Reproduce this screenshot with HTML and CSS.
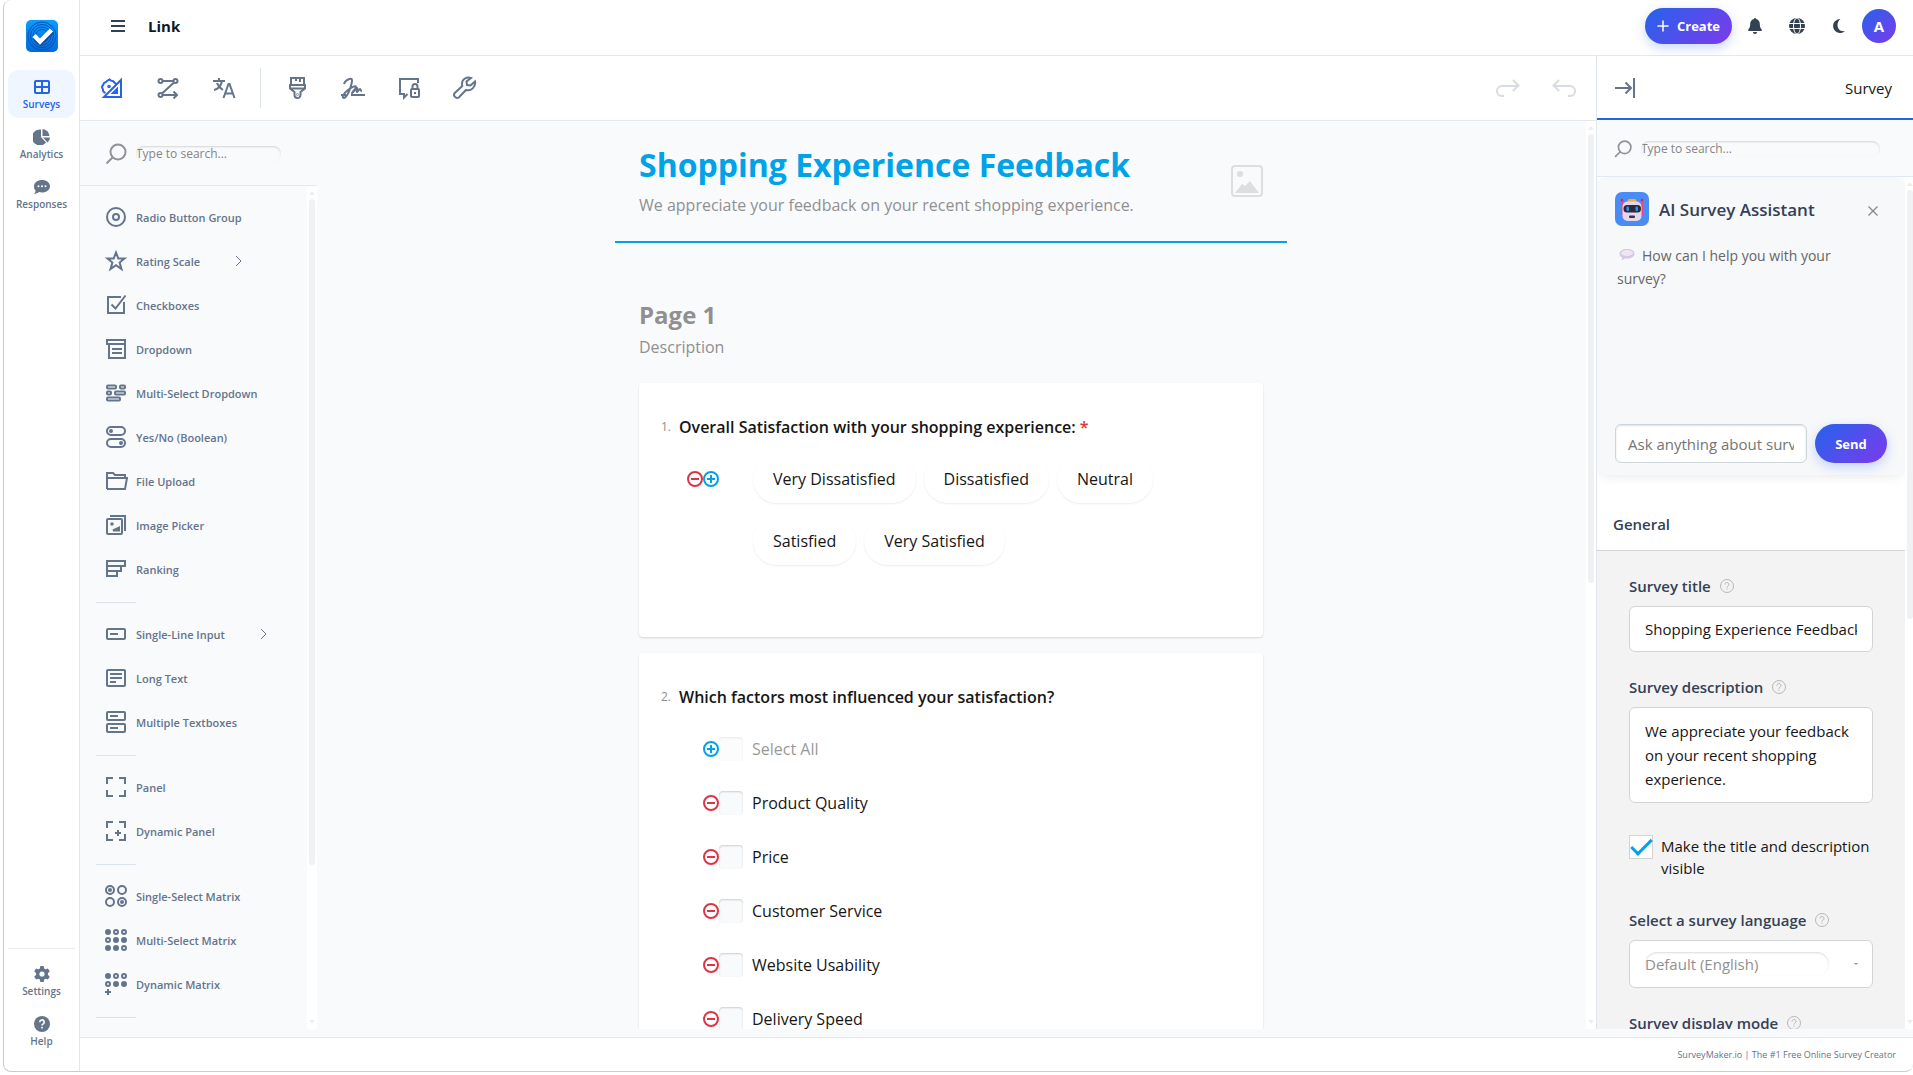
FILE: index.html
```html
<!DOCTYPE html>
<html lang="en">
<head>
  <meta charset="UTF-8" />
  <meta name="viewport" content="width=device-width, initial-scale=1.0"/>
  <title>SurveyMaker.io - Survey Creator</title>
  <link rel="stylesheet" href="styles.css">
</head>
<body>
  <!-- shared icons -->
  <svg class="icon-defs" aria-hidden="true">
    <symbol id="i-plus" viewBox="0 0 16 16"><circle cx="8" cy="8" r="7"/><path d="M4 8h8M8 4v8"/></symbol>
    <symbol id="i-minus" viewBox="0 0 16 16"><circle cx="8" cy="8" r="7"/><path d="M4 8h8"/></symbol>
    <symbol id="i-help" viewBox="0 0 16 16"><circle cx="8" cy="8" r="6.500"/><path d="M6 6.600a2 2 0 1 1 3 1.600c-.7.4-1 .7-1 1.400M8 10.600v1.200"/></symbol>
    <symbol id="i-search" viewBox="0 0 24 24"><circle cx="14" cy="10" r="7.500"/><path d="M9 15l-6.500 6.500"/></symbol>
    <symbol id="i-next" viewBox="0 0 8 12"><path d="M1 1l5 5-5 5"/></symbol>
  </svg>

  <div class="app">
    <nav class="sidebar">
      <a href="#" class="logo" aria-label="SurveyMaker">
        <svg width="32" height="32" viewBox="0 0 32 32">
          <defs><linearGradient id="logoBg" x1="0" y1="0" x2="0" y2="1"><stop offset="0" stop-color="#0a9dff"/><stop offset="1" stop-color="#0468d8"/></linearGradient></defs>
          <rect width="32" height="32" rx="5" fill="url(#logoBg)"/>
          <g fill="none" stroke="#0451b4"><circle cx="16" cy="16" r="14"/><circle cx="16" cy="16" r="11.500"/><circle cx="16" cy="16" r="9"/><circle cx="16" cy="16" r="6.500"/></g>
          <path d="M8.500 17.500l6 5.500L26.500 11.500" fill="none" stroke="#0a48a0" stroke-width="4.500"/>
          <path d="M8 15.500l6 6L25.500 10" fill="none" stroke="#fff" stroke-width="4.500"/>
        </svg>
      </a>
      <a href="#" class="nav-item active">
        <svg width="18" height="16" viewBox="0 0 18 16" fill="none" stroke="currentColor" stroke-width="2"><rect x="2" y="2" width="14" height="12" rx="1"/><path d="M9 2v12M2 8h14"/></svg>
        <span>Surveys</span>
      </a>
      <a href="#" class="nav-item">
        <svg width="18" height="16" viewBox="0 0 18 16" fill="currentColor"><path d="M8 .5V8l5 5.500A8 8 0 1 1 8 .5z"/><path d="M9.500 0A7.500 7.500 0 0 1 16.500 7h-7z"/><path d="M10 8.500h7a7 7 0 0 1-2.500 5z"/></svg>
        <span>Analytics</span>
      </a>
      <a href="#" class="nav-item">
        <svg width="18" height="16" viewBox="0 0 18 16"><path fill="currentColor" d="M9 1c4.500 0 8 2.700 8 6.200s-3.500 6.300-8 6.300c-1 0-2-.2-2.900-.4C4.800 14.200 3 15 1 15c.9-1 1.500-2 1.700-3.200A5.800 5.800 0 0 1 1 7.200C1 3.700 4.500 1 9 1z"/><g fill="#fff"><circle cx="5.500" cy="7.300" r="1"/><circle cx="9" cy="7.300" r="1"/><circle cx="12.500" cy="7.300" r="1"/></g></svg>
        <span>Responses</span>
      </a>
      <div class="nav-bottom">
        <a href="#" class="nav-item">
          <svg width="18" height="16" viewBox="0 0 18 16"><g fill="currentColor"><circle cx="9" cy="8" r="6"/><rect x="7" y="0" width="4" height="16" rx="1"/><rect x="7" y="0" width="4" height="16" rx="1" transform="rotate(60 9 8)"/><rect x="7" y="0" width="4" height="16" rx="1" transform="rotate(120 9 8)"/></g><circle cx="9" cy="8" r="2.600" fill="#fff"/></svg>
          <span>Settings</span>
        </a>
        <a href="#" class="nav-item">
          <svg width="18" height="16" viewBox="0 0 16 16"><circle cx="8" cy="8" r="8" fill="currentColor"/><path d="M5.800 6.200a2.200 2.200 0 1 1 3.400 1.700c-.8.5-1.200.8-1.200 1.600M8 10.800v1.700" fill="none" stroke="#fff" stroke-width="1.600"/></svg>
          <span>Help</span>
        </a>
      </div>
    </nav>

    <div class="workspace">
      <header class="topbar">
        <button type="button" class="menu-btn" aria-label="Menu">
          <svg width="14" height="14" viewBox="0 0 14 14" fill="none" stroke="currentColor" stroke-width="2"><path d="M0 2h14M0 7h14M0 12h14"/></svg>
        </button>
        <h1>Link</h1>
        <button type="button" class="btn-gradient create-btn">
          <svg width="12" height="12" viewBox="0 0 12 12" fill="none" stroke="currentColor" stroke-width="1.500" stroke-linecap="round"><path d="M1 6h10M6 1v10"/></svg>
          Create
        </button>
        <button type="button" class="icon-btn" aria-label="Notifications">
          <svg width="16" height="16" viewBox="0 0 16 16" fill="currentColor"><path d="M8 0c.7 0 1 .5 1 1.100 2.300.5 3.800 2.300 3.800 4.900 0 3 .8 4.300 1.900 5.500.5.700.1 1.500-.7 1.500H2c-.8 0-1.200-.8-.7-1.500C2.400 10.300 3.200 9 3.200 6c0-2.600 1.500-4.400 3.800-4.900C7 .5 7.300 0 8 0zM6 14h4a2 2 0 0 1-4 0z"/></svg>
        </button>
        <button type="button" class="icon-btn" aria-label="Language">
          <svg width="16" height="16" viewBox="0 0 16 16"><circle cx="8" cy="8" r="8" fill="currentColor"/><g fill="none" stroke="#fff"><ellipse cx="8" cy="8" rx="3.500" ry="8"/><path d="M0 5.500h16M0 10.500h16"/></g></svg>
        </button>
        <button type="button" class="icon-btn" aria-label="Dark mode">
          <svg width="14" height="16" viewBox="0 0 14 16" fill="currentColor"><path d="M8.500 1A7 7 0 1 0 13 13c-4.500.8-7.500-2-7.500-6 0-2.600 1.200-4.800 3-6z"/></svg>
        </button>
        <button type="button" class="avatar" aria-label="Account">A</button>
      </header>

      <div class="creator">
        <div class="main">
          <div class="toolbar">
            <button type="button" class="tool active" aria-label="Designer">
              <svg width="24" height="24" viewBox="0 0 24 24"><path d="M21 4v17H4z"/><path d="M17 13v4h-4z"/><path d="M5 17.500c-.3-2-2.500-1.500-2-3.500.3-1-1-1.500-1-3s1.500-1.500 1.500-3S6 6.500 6.500 5.500 8.500 4.500 9.500 3.500c1 1 2 1.500 3 1.500s1.500 1.500 2.500 2l1.500 1.500"/><circle cx="9" cy="10.500" r=".8"/></svg>
            </button>
            <button type="button" class="tool" aria-label="Logic">
              <svg width="24" height="24" viewBox="0 0 24 24"><circle cx="4.500" cy="5" r="2"/><circle cx="19.500" cy="5" r="2"/><circle cx="4.500" cy="19" r="2"/><path d="M6.500 5h11M18 6.500L6 17.500M6.500 19H21M17.500 15.500L21 19l-3.500 3.500"/></svg>
            </button>
            <button type="button" class="tool" aria-label="Translations">
              <svg width="24" height="24" viewBox="0 0 24 24"><path d="M1 5h12M7 2v3M10 5c-1 5-4 8-8 9M5 7c1 3 3 5 6 7M11.500 22L16.500 8h1l5 14M13 17.500h8"/></svg>
            </button>
            <span class="tool-sep"></span>
            <button type="button" class="tool" aria-label="Themes">
              <svg width="24" height="24" viewBox="0 0 24 24"><path d="M6 10V2h13v8M11 2v3M15 2v4M5 9h15v3.500L15.500 16v3a3 3 0 0 1-6 0v-3L5 12.500zM5 12.500h15"/><circle cx="12.500" cy="18.500" r=".3"/></svg>
            </button>
            <button type="button" class="tool" aria-label="Signature">
              <svg width="24" height="24" viewBox="0 0 24 24"><path d="M3 8c1-4 8-7 8-4 0 4-4 17-8 18-3 0 0-5 4-8s8-5 8-3-4 5-4 6 3-4 5-5c1 0-1 4 0 4s2-3 3-3 0 2 2 2M0 19h5M10 19h14"/></svg>
            </button>
            <button type="button" class="tool" aria-label="Privacy">
              <svg width="24" height="24" viewBox="0 0 24 24"><path d="M21 7V3H3v15h4v3.500l3.500-3.500"/><rect x="14" y="13" width="8" height="8" rx="1"/><path d="M15.500 13v-2.500a2.500 2.500 0 0 1 5 0V13M18 16v2"/></svg>
            </button>
            <button type="button" class="tool" aria-label="Settings">
              <svg width="24" height="24" viewBox="0 0 24 24"><path d="M18 2c-4-1.500-9 1-9 5.500 0 1 0 1.500.3 2.500L1.800 17c-2.300 2.500 1.400 6.500 4.200 4.200l7-7.200c5 1.500 10-3 9-8.500l-4.500 4-3.500-.5-.5-3.500z"/></svg>
            </button>
            <button type="button" class="tool muted push" aria-label="Redo">
              <svg width="24" height="24" viewBox="0 0 24 24"><path d="M8 20H6a4.500 4.500 0 0 1 0-10h16M17 4l5.500 5.500L17 15"/></svg>
            </button>
            <button type="button" class="tool muted" aria-label="Undo">
              <svg width="24" height="24" viewBox="0 0 24 24"><path d="M16 20h2a4.500 4.500 0 0 0 0-10H2M7 4L1.500 9.500 7 15"/></svg>
            </button>
          </div>

          <div class="design">
            <aside class="toolbox">
              <div class="search">
                <svg width="24" height="24" class="search-icon"><use href="#i-search"/></svg>
                <input type="text" class="search-input" placeholder="Type to search..." aria-label="Search question types">
              </div>
              <div class="scroll-area">
                <div class="tool-list">
                  <button type="button" class="q-type"><svg width="24" height="24" viewBox="0 0 24 24"><circle cx="12" cy="12" r="9"/><circle cx="12" cy="12" r="3"/></svg>Radio Button Group</button>
                  <button type="button" class="q-type"><svg width="24" height="24" viewBox="0 0 24 24"><path d="M12 3.500l2.300 6h6.200l-4.900 4 1.900 6.500-5.500-3.800L6.500 20l1.900-6.500-4.900-4h6.200z"/></svg>Rating Scale<svg class="sub" width="8" height="12"><use href="#i-next"/></svg></button>
                  <button type="button" class="q-type"><svg width="24" height="24" viewBox="0 0 24 24"><path d="M17 4H4v16h16V9M7.500 11.500l4 4L21.500 2.500"/></svg>Checkboxes</button>
                  <button type="button" class="q-type"><svg width="24" height="24" viewBox="0 0 24 24"><path d="M3 3h18v4H3zM5 7v14h16V7M8 12h10M8 16h10"/></svg>Dropdown</button>
                  <button type="button" class="q-type"><svg width="24" height="24" viewBox="0 0 24 24"><rect x="3" y="4.500" width="9" height="3" rx="1"/><rect x="16" y="4.500" width="5" height="3" rx="1"/><rect x="3" y="10.500" width="4" height="3" rx="1"/><rect x="11" y="10.500" width="10" height="3" rx="1"/><rect x="3" y="16.500" width="13" height="3" rx="1"/></svg>Multi-Select Dropdown</button>
                  <button type="button" class="q-type"><svg width="24" height="24" viewBox="0 0 24 24"><rect x="3" y="2" width="18" height="8" rx="4"/><rect x="3" y="14" width="18" height="8" rx="4"/><circle cx="7" cy="6" r="1"/><circle cx="17" cy="18" r="1"/></svg>Yes/No (Boolean)</button>
                  <button type="button" class="q-type"><svg width="24" height="24" viewBox="0 0 24 24"><path d="M3 20V4h6l2 2h10v3M3 9h20l-2 11H3"/></svg>File Upload</button>
                  <button type="button" class="q-type"><svg width="24" height="24" viewBox="0 0 24 24"><rect x="3" y="6" width="15" height="15" rx="1"/><path d="M6 3h15v15"/><path class="solid" d="M9 17.500l6-3v3z"/><circle cx="8" cy="11" r=".8"/></svg>Image Picker</button>
                  <button type="button" class="q-type"><svg width="24" height="24" viewBox="0 0 24 24"><path d="M3 4h18v5H3zM3 9h14v5H3zM3 14h10v5H3z"/></svg>Ranking</button>
                  <hr>
                  <button type="button" class="q-type"><svg width="24" height="24" viewBox="0 0 24 24"><rect x="3" y="7" width="18" height="10" rx="1"/><path d="M6 12h8"/></svg>Single-Line Input<svg class="sub" width="8" height="12"><use href="#i-next"/></svg></button>
                  <button type="button" class="q-type"><svg width="24" height="24" viewBox="0 0 24 24"><rect x="3" y="4" width="18" height="16" rx="1"/><path d="M6 8h12M6 12h12M6 16h6"/></svg>Long Text</button>
                  <button type="button" class="q-type"><svg width="24" height="24" viewBox="0 0 24 24"><rect x="3" y="2" width="18" height="8" rx="1"/><rect x="3" y="14" width="18" height="8" rx="1"/><path d="M6 6h8M6 18h8"/></svg>Multiple Textboxes</button>
                  <hr>
                  <button type="button" class="q-type"><svg width="24" height="24" viewBox="0 0 24 24"><path d="M9 3H3v6M15 3h6v6M3 15v6h6M21 15v6h-6"/></svg>Panel</button>
                  <button type="button" class="q-type"><svg width="24" height="24" viewBox="0 0 24 24"><path d="M9 3H3v6M15 3h6v6M3 15v6h6M21 15v6h-6M11 14h6M14 11v6"/></svg>Dynamic Panel</button>
                  <hr>
                  <button type="button" class="q-type"><svg width="24" height="24" viewBox="0 0 24 24"><circle cx="6" cy="6" r="4"/><circle cx="18" cy="6" r="4"/><circle cx="6" cy="18" r="4"/><circle cx="18" cy="18" r="4"/><circle cx="6" cy="6" r="1"/><circle cx="18" cy="18" r="1"/></svg>Single-Select Matrix</button>
                  <button type="button" class="q-type"><svg width="24" height="24" viewBox="0 0 24 24"><g class="solid"><circle cx="4" cy="4" r="2"/><circle cx="12" cy="12" r="2"/><circle cx="20" cy="12" r="2"/><circle cx="4" cy="20" r="2"/><circle cx="12" cy="20" r="2"/></g><circle cx="12" cy="4" r="2"/><circle cx="20" cy="4" r="2"/><circle cx="4" cy="12" r="2"/><circle cx="20" cy="20" r="2"/></svg>Multi-Select Matrix</button>
                  <button type="button" class="q-type"><svg width="24" height="24" viewBox="0 0 24 24"><g class="solid"><circle cx="4" cy="4" r="2"/><circle cx="12" cy="12" r="2"/><circle cx="20" cy="12" r="2"/></g><circle cx="12" cy="4" r="2"/><circle cx="20" cy="4" r="2"/><circle cx="4" cy="12" r="2"/><path d="M1 20h6M4 17v6"/></svg>Dynamic Matrix</button>
                  <hr>
                </div>
                <div class="scrollbar"><span class="thumb thumb-toolbox"></span></div>
              </div>
            </aside>

            <main class="canvas">
              <div class="survey">
                <header class="survey-header">
                  <div>
                    <h2>Shopping Experience Feedback</h2>
                    <p>We appreciate your feedback on your recent shopping experience.</p>
                  </div>
                  <svg width="32" height="32" viewBox="0 0 32 32"><rect x="1" y="1" width="30" height="30" rx="3" fill="none" stroke="#dcdee0" stroke-width="2"/><circle cx="9" cy="9" r="3" fill="#dcdee0"/><path d="M4 28l7-9 3 2 5-5 9 12z" fill="#dcdee0"/></svg>
                </header>
                <div class="page-head">
                  <h3>Page 1</h3>
                  <p>Description</p>
                </div>
                <section class="question">
                  <h4><span class="num">1.</span>Overall Satisfaction with your shopping experience: <span class="required">*</span></h4>
                  <div class="rating">
                    <div class="rating-actions">
                      <button type="button" class="round remove" aria-label="Remove rate"><svg width="16" height="16"><use href="#i-minus"/></svg></button>
                      <button type="button" class="round add" aria-label="Add rate"><svg width="16" height="16"><use href="#i-plus"/></svg></button>
                    </div>
                    <div class="rates">
                      <button type="button">Very Dissatisfied</button>
                      <button type="button">Dissatisfied</button>
                      <button type="button">Neutral</button>
                      <button type="button">Satisfied</button>
                      <button type="button">Very Satisfied</button>
                    </div>
                  </div>
                </section>
                <section class="question">
                  <h4><span class="num">2.</span>Which factors most influenced your satisfaction?</h4>
                  <ul class="choices">
                    <li class="inactive"><button type="button" class="round add" aria-label="Add Select All"><svg width="16" height="16"><use href="#i-plus"/></svg></button><label><input type="checkbox">Select All</label></li>
                    <li><button type="button" class="round remove" aria-label="Remove"><svg width="16" height="16"><use href="#i-minus"/></svg></button><label><input type="checkbox">Product Quality</label></li>
                    <li><button type="button" class="round remove" aria-label="Remove"><svg width="16" height="16"><use href="#i-minus"/></svg></button><label><input type="checkbox">Price</label></li>
                    <li><button type="button" class="round remove" aria-label="Remove"><svg width="16" height="16"><use href="#i-minus"/></svg></button><label><input type="checkbox">Customer Service</label></li>
                    <li><button type="button" class="round remove" aria-label="Remove"><svg width="16" height="16"><use href="#i-minus"/></svg></button><label><input type="checkbox">Website Usability</label></li>
                    <li><button type="button" class="round remove" aria-label="Remove"><svg width="16" height="16"><use href="#i-minus"/></svg></button><label><input type="checkbox">Delivery Speed</label></li>
                  </ul>
                </section>
              </div>
              <div class="scrollbar"><span class="thumb thumb-canvas"></span></div>
            </main>
          </div>
        </div>

        <aside class="props">
          <div class="props-head">
            <button type="button" aria-label="Collapse panel"><svg width="20" height="20" viewBox="0 0 20 20" fill="none" stroke="currentColor" stroke-width="2"><path d="M0 10h16M10.500 4.500L16 10l-5.500 5.500M19 0v20"/></svg></button>
            <span>Survey</span>
          </div>
          <div class="search search-props">
            <svg width="20" height="20" class="search-icon"><use href="#i-search"/></svg>
            <input type="text" class="search-input" placeholder="Type to search..." aria-label="Search properties">
          </div>
          <div class="scroll-area">
            <div class="props-body">
              <section class="assistant">
                <div class="assistant-head">
                  <svg width="34" height="34" viewBox="0 0 34 34">
                    <rect width="34" height="34" rx="7" fill="#4b8bf5"/>
                    <path d="M7 8v15M27 8v15" stroke="#e8487c" stroke-width="2"/>
                    <circle cx="7" cy="8" r="1.300" fill="#d9264f"/><circle cx="27" cy="8" r="1.300" fill="#d9264f"/>
                    <rect x="12.500" y="7" width="9" height="4" rx="2" fill="#f4b223"/>
                    <rect x="7.500" y="9.500" width="19" height="19.500" rx="5" fill="#e4d7ea"/>
                    <rect x="8.500" y="13" width="17.500" height="7.500" rx="3.500" fill="#30273f"/>
                    <rect x="11.500" y="14.500" width="2.500" height="4.500" rx="1" fill="#1d9fe8"/><rect x="20.500" y="14.500" width="2.500" height="4.500" rx="1" fill="#1d9fe8"/>
                    <rect x="14" y="23.500" width="6" height="2.500" rx="1" fill="#3b3046"/>
                  </svg>
                  <h2>AI Survey Assistant</h2>
                  <button type="button" aria-label="Close"><svg width="10" height="10" viewBox="0 0 10 10" fill="none" stroke="currentColor" stroke-width="1.300"><path d="M.5.5l9 9M9.500.5l-9 9"/></svg></button>
                </div>
                <p><svg width="16" height="12" viewBox="0 0 16 12"><path d="M8 0c4.500 0 7.500 2 7.500 4.800S12.500 9.500 8 9.500c-.8 0-1.500 0-2.200-.2-.8 1-1.800 1.500-3.300 1.700.7-.8.8-1.600.7-2.500C1.500 7.600.5 6.400.5 4.800.5 2 3.500 0 8 0z" fill="#d6c8e2"/><ellipse cx="8" cy="4" rx="6" ry="3" fill="#efe6f4"/></svg>How can I help you with your survey?</p>
                <div class="ask">
                  <input type="text" placeholder="Ask anything about surveys..." aria-label="Ask the assistant">
                  <button type="button" class="btn-gradient send-btn">Send</button>
                </div>
              </section>
              <h3 class="group-title">General</h3>
              <div class="fields">
                <div class="field">
                  <label for="surveyTitle">Survey title <svg width="16" height="16"><use href="#i-help"/></svg></label>
                  <input type="text" id="surveyTitle" value="Shopping Experience Feedback">
                </div>
                <div class="field">
                  <label for="surveyDesc">Survey description <svg width="16" height="16"><use href="#i-help"/></svg></label>
                  <textarea id="surveyDesc" rows="3">We appreciate your feedback on your recent shopping experience.</textarea>
                </div>
                <label class="check-field"><input type="checkbox" checked><span>Make the title and description visible</span></label>
                <div class="field">
                  <label for="surveyLang">Select a survey language <svg width="16" height="16"><use href="#i-help"/></svg></label>
                  <div class="select-box">
                    <select id="surveyLang"><option>Default (English)</option></select>
                    <i class="caret"></i>
                  </div>
                </div>
                <div class="field">
                  <label for="surveyMode">Survey display mode <svg width="16" height="16"><use href="#i-help"/></svg></label>
                  <div class="select-box">
                    <select id="surveyMode"><option>Auto</option></select>
                    <i class="caret"></i>
                  </div>
                </div>
              </div>
            </div>
            <div class="scrollbar scrollbar-props"><span class="thumb thumb-props"></span></div>
          </div>
        </aside>
      </div>

      <footer class="footer">SurveyMaker.io | The #1 Free Online Survey Creator</footer>
    </div>
  </div>
</body>
</html>
```

FILE: styles.css
```css
* { margin: 0; padding: 0; box-sizing: border-box; }
body {
  font-family: "Open Sans", "Noto Sans", sans-serif;
  font-size: 16px;
  color: #161616;
  background: #fff;
  height: 100vh;
  padding: 0 0 3px 3px;
  overflow: hidden;
}
button, input, select, textarea { font: inherit; color: inherit; border: none; background: none; }
button { cursor: pointer; }
a { text-decoration: none; }
ul { list-style: none; }
svg { display: block; flex: none; }
.icon-defs { position: absolute; width: 0; height: 0; }

.app {
  display: flex;
  height: 100%;
  border: 1px solid #c9cccf;
  border-width: 0 0 1px 1px;
  border-radius: 8px;
  overflow: hidden;
}

/* Left navigation */
.sidebar {
  width: 76px;
  flex: none;
  display: flex;
  flex-direction: column;
  gap: 2px;
  padding: 20px 4px 16px;
  border-right: 1px solid #e2e8f0;
}
.logo { align-self: center; margin-bottom: 16px; }
.nav-item {
  display: flex;
  flex-direction: column;
  align-items: center;
  gap: 2px;
  height: 48px;
  padding-top: 9px;
  border-radius: 10px;
  color: #64748b;
  font-size: 10px;
  font-weight: 600;
  line-height: 14px;
}
.nav-item.active { background: #eff6ff; color: #2563eb; }
.nav-bottom {
  margin-top: auto;
  display: flex;
  flex-direction: column;
  gap: 2px;
  padding-top: 8px;
  border-top: 1px solid #e9edf3;
}

.workspace { flex: 1; min-width: 0; display: flex; flex-direction: column; }

/* Top bar */
.topbar {
  display: flex;
  align-items: center;
  height: 56px;
  flex: none;
  padding: 0 17px 3px 31px;
  border-bottom: 1px solid #e2e8f0;
  color: #334155;
}
.topbar h1 { font-size: 15px; font-weight: 700; color: #0f172a; margin: 0 auto 0 23px; }
.btn-gradient {
  display: flex;
  align-items: center;
  justify-content: center;
  gap: 8px;
  border-radius: 20px;
  background: linear-gradient(135deg, #2563eb, #7c3aed);
  box-shadow: 0 4px 12px rgba(37, 99, 235, 0.25);
  color: #fff;
  font-size: 13px;
  font-weight: 700;
}
.create-btn { height: 36px; padding: 0 12px; margin-right: 2px; }
.icon-btn { width: 42px; height: 36px; display: flex; align-items: center; justify-content: center; }
.avatar {
  width: 34px;
  height: 34px;
  margin-left: 2px;
  border-radius: 50%;
  background: linear-gradient(135deg, #2563eb, #7c3aed);
  color: #fff;
  font-size: 15px;
  font-weight: 700;
}

/* Creator */
.creator {
  flex: 1;
  min-height: 0;
  display: flex;
  padding-bottom: 8px;
  background: #f9fafc;
}
.main { flex: 1; min-width: 0; display: flex; flex-direction: column; }
.toolbar {
  display: flex;
  align-items: center;
  gap: 16px;
  height: 65px;
  flex: none;
  padding: 0 12px;
  background: #fff;
  border-bottom: 1px solid #e2e8f0;
}
.tool {
  width: 40px;
  height: 40px;
  display: flex;
  align-items: center;
  justify-content: center;
  color: #64748b;
}
.tool svg, .q-type svg { fill: none; stroke: currentColor; stroke-width: 2; }
.tool.active { color: #2563eb; }
.tool.muted { color: #d8dbe2; }
.tool.push { margin-left: auto; }
.tool-sep { width: 1px; height: 40px; background: #dde4ee; }
.design { flex: 1; min-height: 0; display: flex; }

/* Toolbox */
.toolbox { width: 237px; flex: none; display: flex; flex-direction: column; }
.search {
  display: flex;
  align-items: center;
  gap: 8px;
  height: 65px;
  flex: none;
  padding: 2px 36px 0 24px;
  border-bottom: 1px solid #e2e8f0;
}
.search-icon { fill: none; stroke: #8f9399; stroke-width: 2; }
.search-input {
  flex: 1;
  min-width: 0;
  height: 16px;
  font-size: 12px;
  line-height: 16px;
  border-radius: 8px;
  box-shadow: inset 0 1px 2px rgba(0, 0, 0, 0.15);
}
.search-input::placeholder { color: #858585; opacity: 1; }
.scroll-area { flex: 1; min-height: 0; display: flex; }
.tool-list { flex: 1; padding: 10px 0 0 16px; overflow: hidden; }
.q-type {
  display: flex;
  align-items: center;
  gap: 8px;
  height: 44px;
  padding: 0 0 2px 8px;
  color: #64748b;
  font-size: 11px;
  font-weight: 600;
  white-space: nowrap;
}
.q-type .solid { fill: currentColor; }
.q-type .sub { margin-left: 27px; stroke-width: 1; }
.tool-list hr { width: 40px; height: 1px; margin: 10px 0; border: none; background: #dbe4ee; }

/* Scroll tracks */
.scrollbar {
  width: 10px;
  flex: none;
  display: flex;
  flex-direction: column;
  align-items: center;
  gap: 4px;
  padding: 5px 2px;
  background: #fff;
}
.scrollbar::before, .scrollbar::after {
  content: "";
  border: 3px solid transparent;
  border-top: none;
  border-bottom: 4px solid #edeef0;
}
.scrollbar::after { margin-top: auto; border-top: 4px solid #edeef0; border-bottom: none; }
.thumb { width: 6px; border-radius: 3px; background: #f0f1f3; }
.thumb-toolbox { height: 80%; }
.thumb-canvas { height: 50%; }
.thumb-props { height: 51%; }

/* Canvas */
.canvas { flex: 1; min-width: 0; display: flex; }
.survey {
  flex: 1;
  display: flex;
  flex-direction: column;
  align-items: center;
  padding-right: 1px;
  overflow: hidden;
}
.survey > * { flex: none; }
.survey-header {
  width: 672px;
  display: flex;
  align-items: center;
  justify-content: space-between;
  padding: 24px;
  border-bottom: 2px solid #00a2e8;
}
.survey-header h2 { font-size: 32px; line-height: 40px; font-weight: 700; color: #00a2e8; }
.survey-header p { line-height: 24px; margin-top: 8px; color: #909090; }
.page-head { width: 624px; margin: 56px 0 24px; color: #909090; }
.page-head h3 { font-size: 24px; line-height: 32px; font-weight: 700; }
.page-head p { line-height: 24px; margin-top: 4px; }
.question {
  width: 624px;
  padding: 32px 22px 72px;
  margin-bottom: 16px;
  background: #fff;
  border-radius: 4px;
  box-shadow: 0 1px 2px rgba(0, 0, 0, 0.15);
}
.question h4 { display: flex; gap: 4px; font-size: 16px; line-height: 24px; font-weight: 600; }
.num { width: 14px; font-size: 12px; font-weight: 400; color: #909090; }
.required { color: #dc3545; }
.round { width: 16px; height: 16px; fill: none; stroke: currentColor; stroke-width: 2; }
.remove { color: #dc3545; }
.add { color: #00a2e8; }
.rating { display: flex; gap: 34px; margin-top: 16px; padding-left: 26px; }
.rating-actions { display: flex; align-items: center; height: 48px; }
.rates { flex: 1; display: flex; flex-wrap: wrap; gap: 14px 8px; padding-right: 80px; }
.rates button {
  height: 48px;
  padding: 0 20px;
  border-radius: 24px;
  box-shadow: 0 1px 2px rgba(0, 0, 0, 0.08);
}
.choices { margin-top: 13px; padding-left: 42px; }
.choices li { display: flex; align-items: center; height: 54px; }
.choices label { display: flex; align-items: center; gap: 9px; }
.choices input {
  appearance: none;
  width: 24px;
  height: 24px;
  border-radius: 4px;
  background: #f9fafc;
  box-shadow: inset 0 1px 2px rgba(0, 0, 0, 0.18);
}
.inactive label { opacity: 0.45; }

/* Property panel */
.props {
  width: 317px;
  flex: none;
  display: flex;
  flex-direction: column;
  background: #fff;
  border-left: 1px solid #dfe6f0;
}
.props-head {
  display: flex;
  align-items: center;
  justify-content: space-between;
  height: 64px;
  flex: none;
  padding: 1px 21px 0 18px;
  border-bottom: 2px solid #2563eb;
  font-size: 15px;
}
.props-head button { color: #64748b; }
.search-props { height: 57px; padding: 1px 33px 0 16px; background: #f9fafc; }
.props-body { flex: 1; min-width: 0; overflow: hidden; }
.assistant {
  display: flex;
  flex-direction: column;
  height: 298px;
  padding: 15px 18px 12px;
  border-radius: 12px;
  background: #f7f8fa;
  box-shadow: 0 2px 12px rgba(0, 0, 0, 0.08);
}
.assistant-head { display: flex; align-items: center; gap: 10px; }
.assistant-head h2 { font-size: 17px; font-weight: 600; color: #334155; }
.assistant-head button { margin: 4px 9px 0 auto; color: #888; }
.assistant p { margin-top: 18px; padding: 0 24px 0 2px; font-size: 14px; line-height: 23px; color: #666; }
.assistant p svg { display: inline-block; margin: 0 7px 0 2px; }
.ask { display: flex; gap: 8px; margin-top: auto; }
.ask input {
  flex: 1;
  min-width: 0;
  height: 39px;
  padding: 0 12px;
  border: 1px solid #cdd5db;
  border-radius: 6px;
  background: #fff;
  font-size: 15px;
  box-shadow: inset 0 1px 2px rgba(0, 0, 0, 0.12);
}
.ask input::placeholder { color: #757575; }
.send-btn { width: 72px; }
.group-title {
  margin-top: 23px;
  padding: 0 16px;
  border-bottom: 1px solid #d4d4d4;
  font-size: 15px;
  line-height: 52px;
  font-weight: 600;
  color: #334155;
}
.fields {
  display: flex;
  flex-direction: column;
  gap: 24px;
  padding: 24px 32px;
  background: #f3f3f3;
  font-size: 15px;
}
.field { display: flex; flex-direction: column; gap: 9px; }
.field label { display: flex; align-items: center; gap: 8px; line-height: 22px; font-weight: 600; color: #334155; }
.field label svg { fill: none; stroke: #b8b8b8; stroke-width: 1; }
.field > input, .field > textarea, .select-box {
  width: 100%;
  border: 1px solid #d4d4d4;
  border-radius: 6px;
  background: #fff;
}
.field > input { height: 46px; padding: 0 15px; }
.field > textarea { height: 96px; padding: 11px 15px; line-height: 24px; resize: none; overflow: hidden; }
.check-field { display: flex; gap: 8px; margin: 8px 0 6px; line-height: 22px; }
.check-field input {
  appearance: none;
  width: 24px;
  height: 24px;
  flex: none;
  border: 1px solid #d4d4d4;
  background: #fff;
  display: grid;
  place-items: center;
}
.check-field input:checked::before {
  content: "";
  width: 18px;
  height: 8px;
  border: solid #00a2e8;
  border-width: 0 0 3px 3px;
  transform: translateY(-3px) rotate(-45deg);
}
.select-box { display: flex; align-items: center; justify-content: space-between; height: 48px; padding: 0 14px 0 15px; }
.select-box select {
  appearance: none;
  width: 184px;
  height: 24px;
  border-radius: 12px;
  box-shadow: inset 0 1px 2px rgba(0, 0, 0, 0.15);
  color: #909090;
}
.caret { border: 2px solid transparent; border-top-color: #909090; border-bottom: none; }
.scrollbar-props { width: 8px; align-items: flex-start; }

.footer {
  height: 34px;
  flex: none;
  padding-right: 17px;
  border-top: 1px solid #e2e8f0;
  color: #64748b;
  font-size: 9px;
  line-height: 33px;
  text-align: right;
}
```
